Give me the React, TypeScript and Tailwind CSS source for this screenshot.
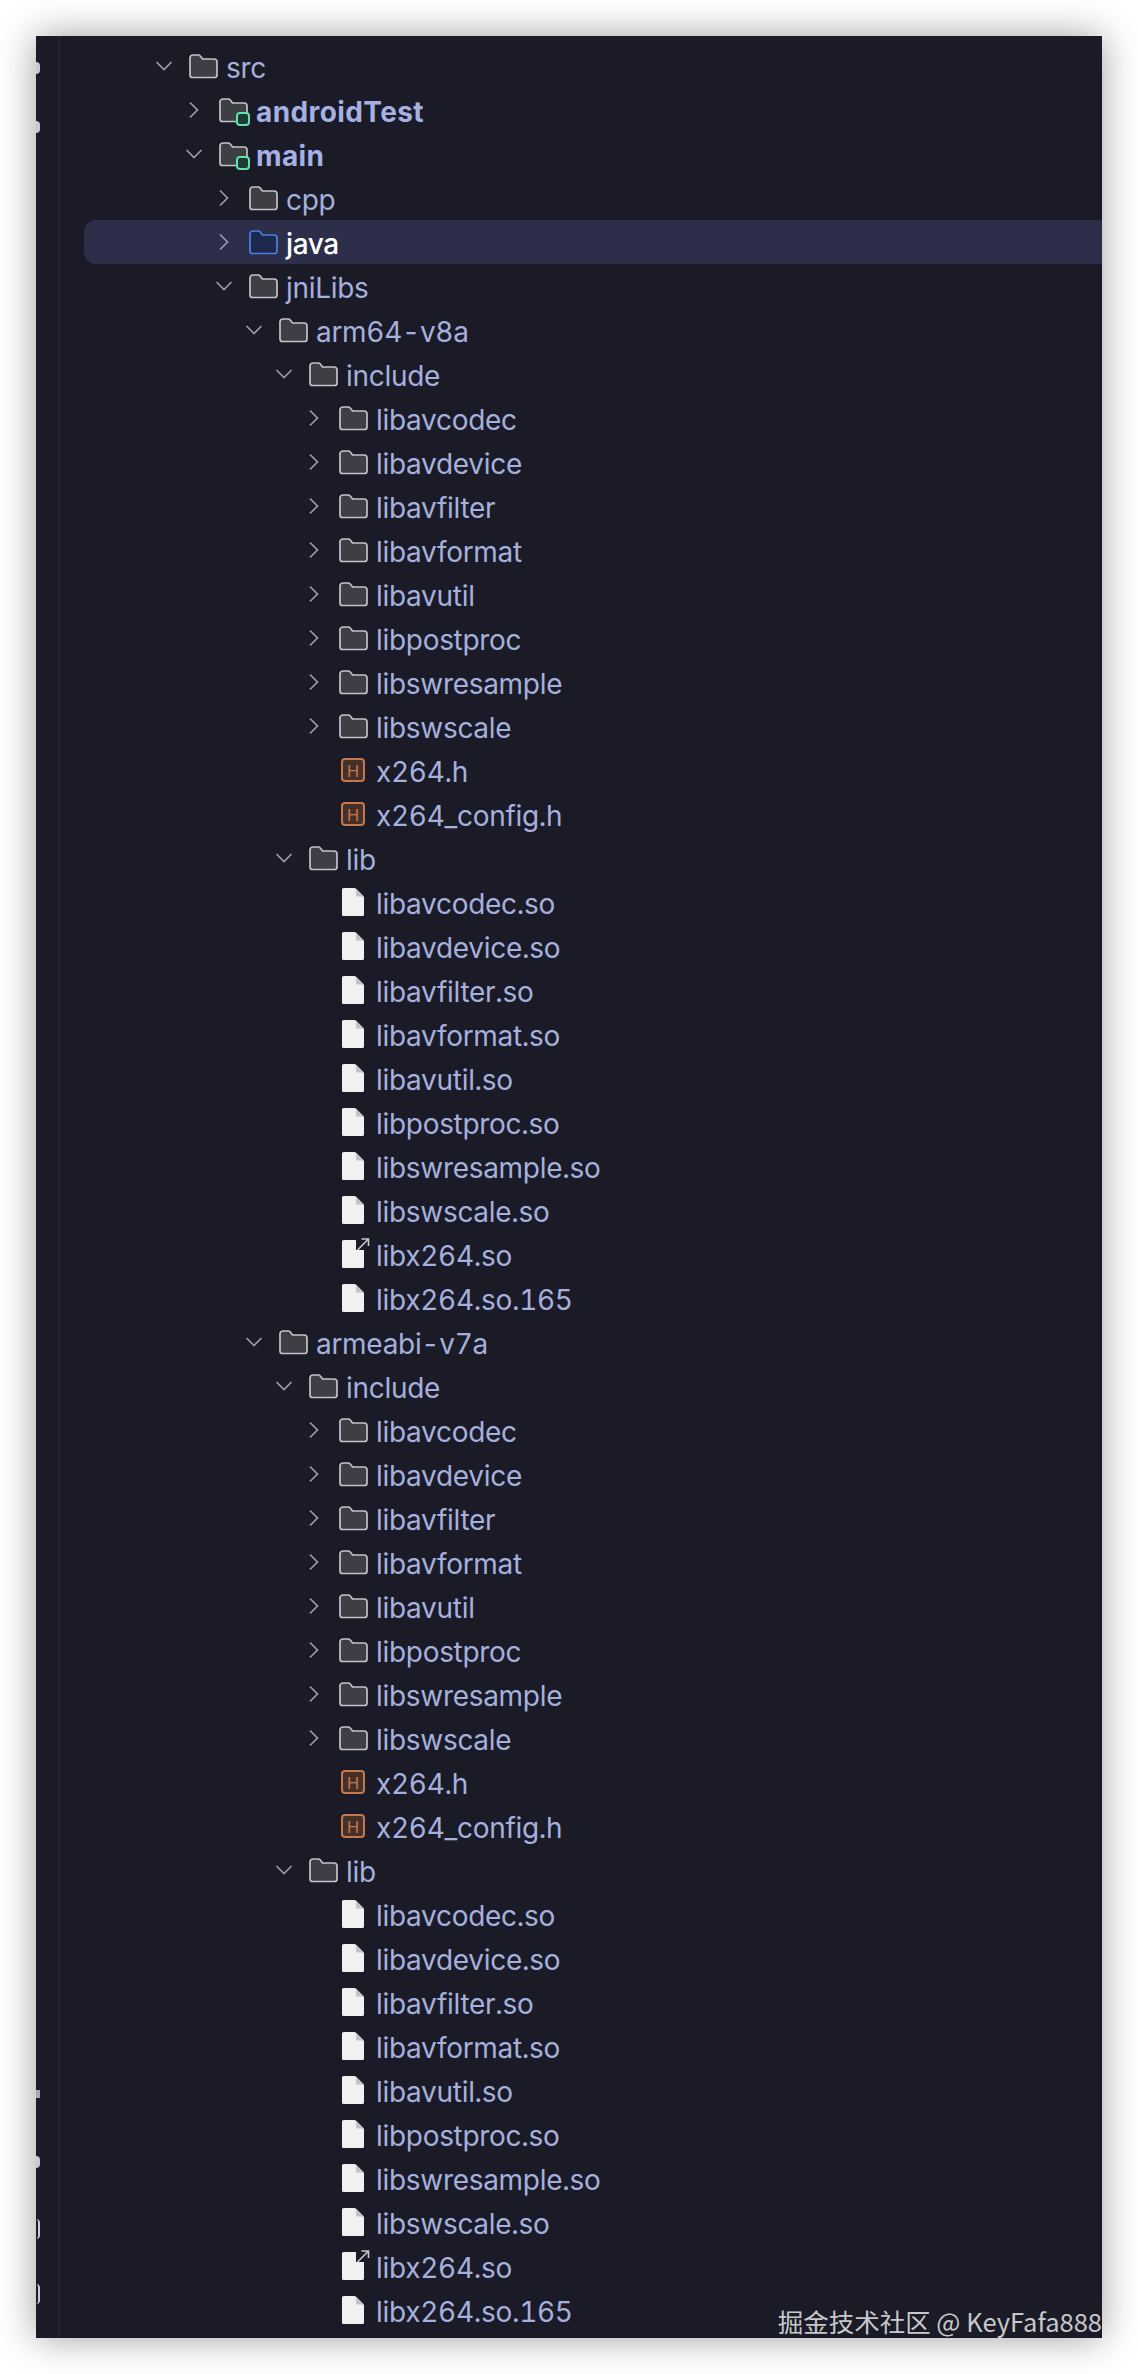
import React from 'react';

type Kind = 'folder' | 'module' | 'source' | 'header' | 'file' | 'link';

interface RowData {
  name: string;
  level: number;
  kind: Kind;
  open?: boolean;
  bold?: boolean;
  selected?: boolean;
}

const FolderIcon = ({ source }: { source?: boolean }) => (
  <svg width="30" height="26" viewBox="0 0 30 26" fill="none" className="block">
    <path
      d="M2 5a3 3 0 0 1 3-3h5.500a2 2 0 0 1 1.500.7l2.600 3.300H26a3 3 0 0 1 3 3V22a2.500 2.500 0 0 1-2.500 2.500h-22A2.500 2.500 0 0 1 2 22Z"
      fill={source ? '#1d2a4d' : '#3e3f45'}
      stroke={source ? '#4a7fe8' : '#c3c3c8'}
      strokeWidth="1.7"
      strokeLinejoin="round"
    />
  </svg>
);

const FileIcon = ({ link }: { link?: boolean }) => (
  <svg width="30" height="32" viewBox="0 0 30 32" fill="none" className="block overflow-visible">
    {link ? (
      <>
        <path d="M4 3.500A1.500 1.500 0 0 1 5.500 2H18V12H26V28.500a1.500 1.500 0 0 1-1.500 1.500h-19A1.500 1.500 0 0 1 4 28.500Z" fill="#f1f1f2" />
        <path d="M19.500 12 30.500 1M23.500 1H30.500V8" stroke="#c9c9cd" strokeWidth="1.6" />
      </>
    ) : (
      <>
        <path d="M4 3.500A1.500 1.500 0 0 1 5.500 2H17l9 9v17.500a1.500 1.500 0 0 1-1.500 1.500h-19A1.500 1.500 0 0 1 4 28.500Z" fill="#f1f1f2" />
        <path d="M18 2.500 26 10.500H18Z" fill="#c4c4c6" />
      </>
    )}
  </svg>
);

const HeaderIcon = () => (
  <div className="flex h-6 w-6 items-center justify-center rounded-[4px] border-2 border-[#c4784c] bg-[#45302a] text-[17px] leading-none font-normal text-[#c4784c]">
    H
  </div>
);

const Chevron = ({ open }: { open?: boolean }) => (
  <svg width="20" height="20" viewBox="0 0 20 20" fill="none" className="block">
    <path
      d={open ? 'M2.500 6 10 13.500 17.500 6' : 'M6 2.500 13.500 10 6 17.500'}
      stroke="#9c9ca8"
      strokeWidth="1.7"
    />
  </svg>
);

const flatLibs = ['libavcodec', 'libavdevice', 'libavfilter', 'libavformat', 'libavutil', 'libpostproc', 'libswresample', 'libswscale'];

const abiRows = (abi: string): RowData[] => [
  { name: abi, level: 3, kind: 'folder', open: true },
  { name: 'include', level: 4, kind: 'folder', open: true },
  ...flatLibs.map((name): RowData => ({ name, level: 5, kind: 'folder', open: false })),
  { name: 'x264.h', level: 5, kind: 'header' },
  { name: 'x264_config.h', level: 5, kind: 'header' },
  { name: 'lib', level: 4, kind: 'folder', open: true },
  ...flatLibs.map((name): RowData => ({ name: `${name}.so`, level: 5, kind: 'file' })),
  { name: 'libx264.so', level: 5, kind: 'link' },
  { name: 'libx264.so.165', level: 5, kind: 'file' },
];

const rows: RowData[] = [
  { name: 'src', level: 0, kind: 'folder', open: true },
  { name: 'androidTest', level: 1, kind: 'module', open: false, bold: true },
  { name: 'main', level: 1, kind: 'module', open: true, bold: true },
  { name: 'cpp', level: 2, kind: 'folder', open: false },
  { name: 'java', level: 2, kind: 'source', open: false, selected: true },
  { name: 'jniLibs', level: 2, kind: 'folder', open: true },
  ...abiRows('arm64-v8a'),
  ...abiRows('armeabi-v7a'),
];

const TreeRow = ({ row }: { row: RowData }) => {
  const isFolder = row.kind === 'folder' || row.kind === 'module' || row.kind === 'source';
  const textClass = row.selected
    ? 'text-white font-medium tracking-[-0.4px]'
    : row.bold
      ? 'text-[#a5b1e4] font-bold tracking-[0.4px]'
      : 'text-[#a5b0df] tracking-[-0.3px]';

  return (
    <div className={`flex h-11 items-center rounded-l-xl ${row.selected ? 'bg-[#2c2e4a]' : ''}`}>
      <div className="shrink-0" style={{ width: 60 + row.level * 30 }} />
      <div className="flex w-10 shrink-0 justify-center">
        {row.open !== undefined && <Chevron open={row.open} />}
      </div>
      <div className="relative mr-2 ml-1 flex w-[30px] shrink-0 justify-center">
        {isFolder && <FolderIcon source={row.kind === 'source'} />}
        {row.kind === 'module' && (
          <div className="absolute top-[15px] left-[18px] h-[14px] w-[14px] rounded-[4px] border-2 border-[#64e0ab] bg-[#1e3a36]" />
        )}
        {row.kind === 'header' && <HeaderIcon />}
        {row.kind === 'file' && <FileIcon />}
        {row.kind === 'link' && <FileIcon link />}
      </div>
      <span className={`pt-[3px] text-[28px] leading-none whitespace-nowrap tabular-nums font-['Inter',sans-serif] ${textClass}`}>
        {row.name}
      </span>
    </div>
  );
};

export default function App() {
  return (
    <div className="h-[2374px] w-[1138px] overflow-hidden bg-white pt-9 pl-9">
      <div className="relative flex h-[2302px] w-[1066px] bg-[#1a1b26] shadow-[0_0_36px_rgba(0,0,0,0.38)]">
        {/* clipped tool window strip */}
        <div className="relative w-6 shrink-0 border-r-2 border-[#22232f]">
          <div className="absolute top-[26px] left-0 h-3 w-1 rounded-r-full bg-[#c9c9d0]" />
          <div className="absolute top-[85px] left-0 h-3 w-1 rounded-r-full bg-[#c9c9d0]" />
          <div className="absolute top-[2054px] left-0 h-2 w-1 bg-[#a9a9b2]" />
          <div className="absolute top-[2120px] left-0 h-3 w-1 rounded-r-full bg-[#c9c9d0]" />
          <div className="absolute top-[2183px] left-0 h-5 w-1 rounded-r-sm border-r-2 border-[#c9c9d0]" />
          <div className="absolute top-[2248px] left-0 h-5 w-1 rounded-r-full border-r-2 border-[#c9c9d0]" />
        </div>
        <div className="min-w-0 flex-1 pt-2 pl-6">
          {rows.map((row, i) => (
            <TreeRow key={i} row={row} />
          ))}
        </div>
        <div className="absolute right-0 bottom-0 text-[25.5px] leading-[34px] whitespace-nowrap text-[#c8c8cc] font-['Noto_Sans_CJK_SC','Noto_Sans',sans-serif]">
          掘金技术社区 @ KeyFafa888
        </div>
      </div>
    </div>
  );
}
